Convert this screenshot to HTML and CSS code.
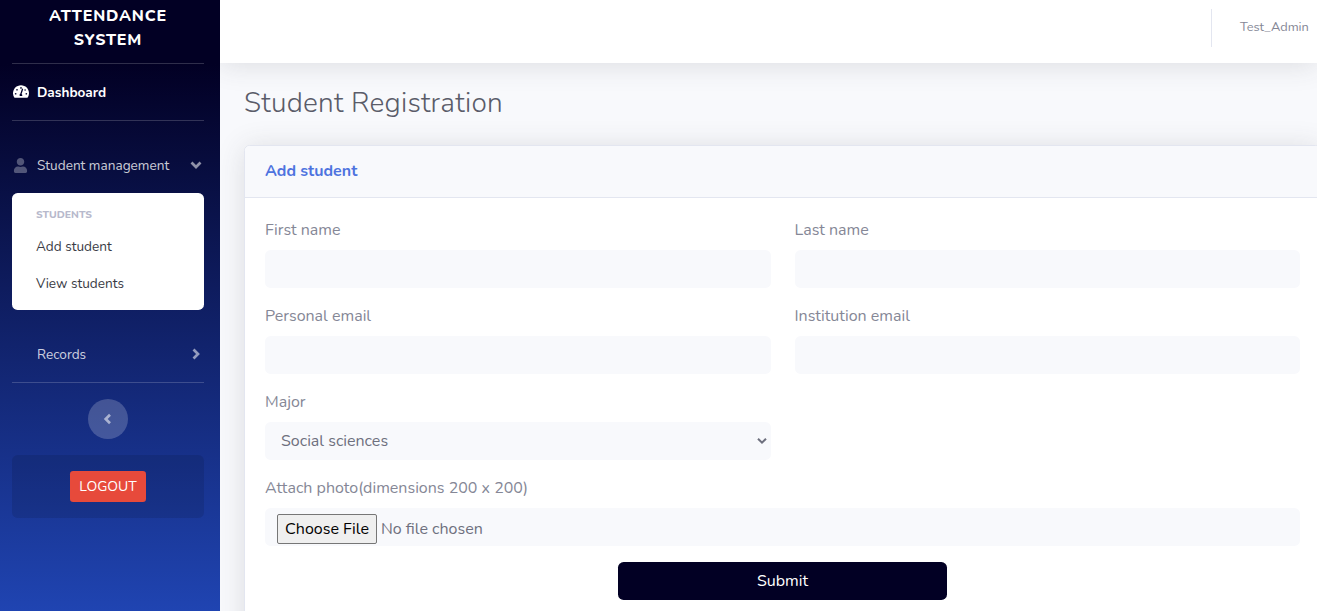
FILE: index.html
```
<!DOCTYPE html>
<html lang="en">
<head>
<meta charset="utf-8">
<title>Student Registration</title>
<link rel="stylesheet" href="styles.css">
</head>
<body>
<div class="wrapper">
  <nav class="sidebar">
    <a class="brand"><span>ATTENDANCE</span><span>SYSTEM</span></a>
    <hr class="divider">
    <a class="nav-link active">
      <svg class="nav-icon dash" viewBox="0 0 576 512"><path fill="currentColor" d="M288 32C129 32 0 161 0 320c0 53 14 102 39 145 6 9 16 15 27 15h444c11 0 21-6 27-15 25-43 39-92 39-145C576 161 447 32 288 32z"/><g fill="#02032b"><circle cx="288" cy="128" r="30"/><circle cx="144" cy="192" r="30"/><circle cx="96" cy="336" r="30"/><circle cx="480" cy="336" r="30"/><circle cx="436" cy="200" r="28"/><path d="M349 153c13 4 20 18 15 31l-55 165c28 19 33 46 20 67h-82c-26-40 0-84 16-82l56-166c4-13 17-20 30-15z"/></g></svg>
      <span class="nav-text">Dashboard</span>
    </a>
    <hr class="divider">
    <a class="nav-link students">
      <svg class="nav-icon user" viewBox="0 0 448 512"><path fill="currentColor" d="M224 256c71 0 128-57 128-128S295 0 224 0 96 57 96 128s57 128 128 128zm90 32h-17c-22 10-47 16-73 16s-51-6-73-16h-17C60 288 0 348 0 422v42c0 27 21 48 48 48h352c27 0 48-21 48-48v-42c0-74-60-134-134-134z"/></svg>
      <span class="nav-text">Student management</span>
      <svg class="chevron" viewBox="0 0 12 12"><path d="M1.500 3.500 6 8l4.500-4.500"/></svg>
    </a>
    <div class="collapse-inner">
      <h6 class="collapse-header">STUDENTS</h6>
      <a class="collapse-item">Add student</a>
      <a class="collapse-item">View students</a>
    </div>
    <a class="nav-link records">
      <span class="nav-icon"></span>
      <span class="nav-text">Records</span>
      <svg class="chevron" viewBox="0 0 12 12"><path d="M3.500 1.500 8 6 3.500 10.500"/></svg>
    </a>
    <hr class="divider">
    <button class="toggle" aria-label="Collapse sidebar"><svg class="chevron" viewBox="0 0 12 12"><path d="M8 1.700 3.700 6 8 10.300"/></svg></button>
    <div class="logout-card"><a class="logout">LOGOUT</a></div>
  </nav>
  <div class="content">
    <header class="topbar">
      <span class="topbar-divider"></span>
      <span class="user-name">Test_Admin</span>
    </header>
    <main class="main">
      <h1 class="page-title">Student Registration</h1>
      <section class="card">
        <div class="card-header"><h6 class="card-title">Add student</h6></div>
        <form class="form">
          <div class="field"><label>First name</label><div class="control"></div></div>
          <div class="field"><label>Last name</label><div class="control"></div></div>
          <div class="field"><label>Personal email</label><div class="control"></div></div>
          <div class="field"><label>Institution email</label><div class="control"></div></div>
          <div class="field"><label>Major</label>
            <div class="control select"><span>Social sciences</span><svg class="arrow" viewBox="0 0 10 8"><path d="M1 1.700 5 5.700 9 1.700"/></svg></div>
          </div>
          <div class="field full"><label>Attach photo(dimensions 200 x 200)</label>
            <div class="control file"><span class="choose">Choose File</span><span class="file-name">No file chosen</span></div>
          </div>
          <button type="button" class="submit">Submit</button>
        </form>
      </section>
    </main>
  </div>
</div>
</body>
</html>
```
FILE: styles.css
```
* { box-sizing: border-box; }
body {
  margin: 0;
  height: 611px;
  overflow: hidden;
  background: #f8f9fc;
  color: #858796;
  font: 400 16px/24px Nunito, Lato, sans-serif;
}
h1, h6 { margin: 0; }
.wrapper { display: flex; height: 611px; overflow: hidden; }

.sidebar {
  flex: 0 0 220px;
  height: 611px;
  padding: 4px 16px 0 12px;
  display: flex;
  flex-direction: column;
  background: linear-gradient(180deg, #020024 64px, #224abe 659px);
}
.brand {
  display: flex;
  flex-direction: column;
  align-items: center;
  height: 59px;
  color: #fff;
  font-weight: 800;
  letter-spacing: .8px;
}
.divider {
  width: 100%;
  height: 1px;
  margin: 0;
  border: 0;
  background: rgba(255, 255, 255, .18);
}
.nav-link {
  display: flex;
  align-items: center;
  height: 56px;
  font-size: 13.6px;
  color: rgba(255, 255, 255, .8);
}
.nav-link.active { color: #fff; font-weight: 700; }
.nav-text { padding-top: 2px; }
.nav-icon { width: 17px; height: 15px; margin-right: 8px; flex: none; }
.nav-icon.dash { width: 16px; height: 15px; margin: 0 8px 1px 1px; }
.nav-icon.user { color: rgba(255, 255, 255, .3); }
.students { margin-top: 16px; }
.chevron {
  width: 12px;
  height: 12px;
  fill: none;
  stroke: rgba(255, 255, 255, .55);
  stroke-width: 2.7;
}
.nav-link .chevron { margin: 0 2px 0 auto; }
.collapse-inner {
  height: 117px;
  border-radius: 5.6px;
  background: #fff;
  padding: 14px 24px 0;
  font-size: 13.6px;
  color: #3a3b45;
}
.collapse-header {
  font-size: 10.4px;
  line-height: 16px;
  font-weight: 800;
  color: #b7b9cc;
}
.collapse-item { display: block; height: 37px; line-height: 20px; padding-top: 14px; }
.records { margin-top: 16px; }
.toggle {
  width: 40px;
  height: 40px;
  flex: none;
  margin: 16px auto;
  border: 0;
  border-radius: 50%;
  background: rgba(255, 255, 255, .2);
  display: flex;
  align-items: center;
  justify-content: center;
  padding: 0;
}
.logout-card {
  height: 63px;
  border-radius: 5.6px;
  background: rgba(0, 0, 0, .1);
  display: flex;
  align-items: center;
  justify-content: center;
}
.logout {
  width: 76px;
  height: 31px;
  border-radius: 3.2px;
  background: #e74a3b;
  color: #fff;
  font-size: 14px;
  line-height: 31px;
  text-align: center;
}

.content { flex: 1; min-width: 0; height: 611px; overflow: hidden; }
.topbar {
  height: 63px;
  background: #fff;
  box-shadow: 0 2px 28px rgba(58, 59, 69, .15);
  display: flex;
  justify-content: flex-end;
  padding: 9px 8px 0 0;
}
.topbar-divider { width: 1px; height: 38px; background: #e3e6f0; margin-right: 28px; }
.user-name { width: 69px; white-space: nowrap; font-size: 12.8px; line-height: 36px; }

.main { padding: 23px 0 0 24px; }
.page-title { font-size: 28px; line-height: 34px; font-weight: 350; letter-spacing: .27px; color: #5a5c69; }
.card {
  width: 1077px;
  height: 520px;
  margin-top: 25px;
  border: 1px solid #e3e6f0;
  border-radius: 5.6px;
  background: #fff;
  box-shadow: 0 2px 28px rgba(58, 59, 69, .15);
}
.card-header {
  height: 52px;
  padding: 13px 20px;
  background: #f8f9fc;
  border-bottom: 1px solid #e3e6f0;
  border-radius: 5px 5px 0 0;
}
.card-title { font-size: 16px; font-weight: 700; color: #4e73df; }
.form {
  display: grid;
  grid-template-columns: 1fr 1fr;
  gap: 16px 24px;
  padding: 20px;
}
.field { display: flex; flex-direction: column; align-items: flex-start; gap: 8px; }
.full { grid-column: 1 / -1; }
.control {
  width: 100%;
  height: 38px;
  border-radius: 5.6px;
  background: #f8f9fc;
  display: flex;
  align-items: center;
  color: #6e707e;
}
.select { padding: 0 4px 0 16px; justify-content: space-between; }
.arrow { width: 10px; height: 8px; fill: none; stroke: #6e707e; stroke-width: 2; }
.file { padding: 4px 12px 0; gap: 4px; }
.file-name { line-height: 30px; padding-bottom: 1px; }
.choose {
  width: 100px;
  height: 30px;
  border: 1px solid #767676;
  border-radius: 2px;
  background: #efefef;
  color: #000;
  line-height: 28px;
  text-align: center;
}
.submit {
  grid-column: 1 / -1;
  justify-self: center;
  width: 329px;
  height: 38px;
  border: 0;
  border-radius: 5.6px;
  background: #020024;
  color: #fff;
  font: inherit;
}
```
